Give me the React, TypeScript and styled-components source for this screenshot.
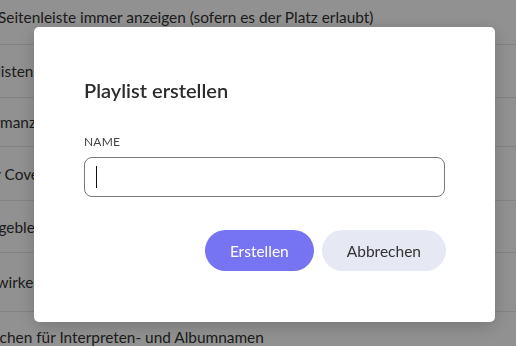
import styled, { createGlobalStyle } from 'styled-components';

const GlobalStyle = createGlobalStyle`
  html, body {
    margin: 0;
    padding: 0;
    background: #fff;
    font-family: Lato, "Noto Sans", sans-serif;
    overflow: hidden;
  }
`;

const rows = [
  { text: 'Seitenleiste immer anzeigen (sofern es der Platz erlaubt)', shift: 2, height: 45 },
  { text: 'Playlisten in der Seitenleiste anzeigen', shift: 31, height: 53 },
  { text: 'Performanz-Modus aktivieren', shift: 42, height: 49 },
  { text: 'Farbe der Cover verwenden', shift: 63, height: 54 },
  { text: 'Ausgeblendete Titel anzeigen', shift: 27, height: 52 },
  { text: 'Mitwirkende anzeigen', shift: 27, height: 59 },
  { text: 'Trennzeichen für Interpreten- und Albumnamen', shift: 57, height: 50 },
];

export default function App() {
  return (
    <>
      <GlobalStyle />
      <Settings>
        {rows.map((r) => (
          <Row key={r.text} $height={r.height}>
            <RowText $shift={r.shift}>{r.text}</RowText>
          </Row>
        ))}
      </Settings>
      <Backdrop>
        <Dialog>
          <Title>Playlist erstellen</Title>
          <Label>NAME</Label>
          <Field>
            <Input type="text" />
            <Caret />
          </Field>
          <Actions>
            <Button $primary>Erstellen</Button>
            <Button>Abbrechen</Button>
          </Actions>
        </Dialog>
      </Backdrop>
    </>
  );
}

const Settings = styled.div`
  display: flex;
  flex-direction: column;
  height: 346px;
  overflow: hidden;
`;

const Row = styled.div<{ $height: number }>`
  flex: 0 0 ${(p) => p.$height}px;
  display: flex;
  align-items: center;
  border-bottom: 1px solid #e6e6e6;
  box-sizing: border-box;
  &:first-child {
    align-items: flex-start;
    padding-top: 8px;
  }
`;

const RowText = styled.span<{ $shift: number }>`
  margin-left: -${(p) => p.$shift}px;
  font-size: 15.4px;
  color: #333;
  white-space: nowrap;
`;

const Backdrop = styled.div`
  position: fixed;
  inset: 0;
  background: rgba(0, 0, 0, 0.43);
  display: flex;
  align-items: flex-start;
  padding: 27px 0 0 34px;
`;

const Dialog = styled.div`
  width: 461px;
  height: 295px;
  box-sizing: border-box;
  background: #fff;
  border-radius: 5px;
  box-shadow: 0 4px 18px rgba(0, 0, 0, 0.2);
  padding: 50px 50px;
  display: flex;
  flex-direction: column;
`;

const Title = styled.h2`
  margin: 0;
  font-size: 20px;
  font-weight: 600;
  color: #2d2d2d;
  line-height: 26px;
`;

const Label = styled.label`
  margin-top: 32px;
  font-size: 12px;
  color: #444;
  letter-spacing: 0.2px;
  line-height: 14px;
`;

const Field = styled.div`
  position: relative;
  margin-top: 8px;
`;

const Input = styled.input`
  width: 100%;
  height: 40px;
  box-sizing: border-box;
  border: 1px solid #7a7a7a;
  border-radius: 8px;
  padding: 0 12px;
  font-family: inherit;
  font-size: 15.5px;
  outline: none;
`;

const Caret = styled.span`
  position: absolute;
  left: 12px;
  top: 9px;
  width: 1px;
  height: 22px;
  background: #111;
`;

const Actions = styled.div`
  display: flex;
  justify-content: flex-end;
  gap: 8px;
  margin-top: 33px;
  margin-right: -1px;
`;

const Button = styled.button<{ $primary?: boolean }>`
  height: 41px;
  border: none;
  border-radius: 21px;
  padding: 0 25px;
  font-family: inherit;
  font-size: 15.5px;
  background: ${(p) => (p.$primary ? '#7674f2' : '#e6e9f3')};
  color: ${(p) => (p.$primary ? '#fff' : '#333')};
  cursor: pointer;
`;
